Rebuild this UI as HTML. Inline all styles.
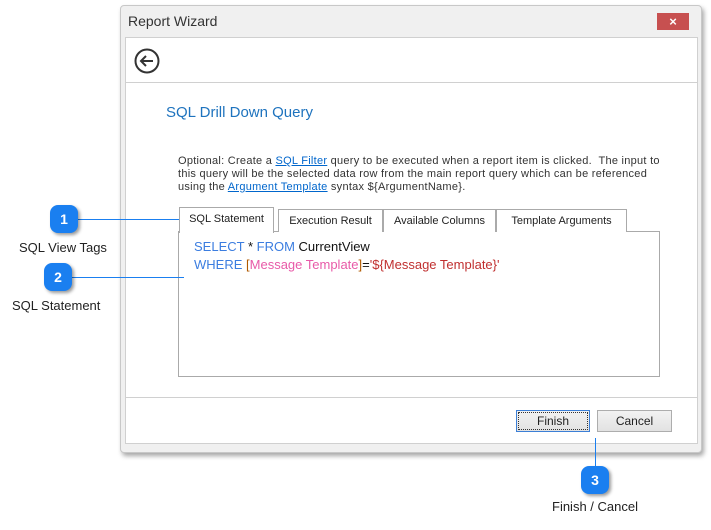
<!DOCTYPE html><html><head><style>
body{margin:0;width:711px;height:530px;background:#fff;position:relative;font-family:"Liberation Sans",sans-serif;overflow:hidden}
.a{position:absolute}
.win{left:120px;top:5px;width:580px;height:446px;background:#f0f0f0;border:1px solid #c8c8c8;border-radius:4px;box-shadow:2px 3px 5px rgba(0,0,0,.35)}
.in{left:125px;top:37px;width:571px;height:405px;background:#fff;border:1px solid #d0d0d0}
.tab{top:209px;height:22px;border:1px solid #aaa;border-bottom:none;background:#fff;font-size:11px;text-align:center;line-height:22px;color:#222}
.badge{width:28px;height:28px;border-radius:8px;background:#1a7ff0;color:#fff;font-weight:bold;font-size:14px;text-align:center;line-height:28px;box-shadow:2px 2px 3px rgba(0,0,0,.4)}
.lbl{font-size:13px;color:#222}
.btn{top:410px;height:20px;border:1px solid #adadad;background:linear-gradient(#f2f2f2,#e2e2e2);font-size:12px;text-align:center;line-height:20px;color:#222}
a{color:#0066cc}
</style></head><body>
<div class="a win"></div>
<div class="a" style="left:128px;top:13px;font-size:14px;color:#333">Report Wizard</div>
<div class="a" style="left:657px;top:13px;width:32px;height:17px;background:#c75050;color:#fff;text-align:center;font-size:13px;line-height:17px;font-weight:bold">×</div>
<div class="a in"></div>
<div class="a" style="left:126px;top:82px;width:571px;border-top:1px solid #d0d0d0"></div>
<svg class="a" style="left:133px;top:47px" width="28" height="28"><circle cx="14" cy="14" r="11.5" fill="none" stroke="#333" stroke-width="2"/><path d="M20 14H8M13 9l-5 5 5 5" fill="none" stroke="#333" stroke-width="2"/></svg>
<div class="a" style="left:166px;top:104px;font-size:15px;color:#1e73be">SQL Drill Down Query</div>
<div class="a" style="left:178px;top:155px;width:486px;font-size:11px;line-height:13px;letter-spacing:0.27px;color:#333">Optional: Create a <a href="#">SQL Filter</a> query to be executed when a report item is clicked.&nbsp; The input to this query will be the selected data row from the main report query which can be referenced using the <a href="#">Argument Template</a> syntax ${ArgumentName}.</div>
<div class="a" style="left:178px;top:231px;width:480px;height:144px;border:1px solid #aaa;background:#fff"></div>
<div class="a tab" style="left:179px;width:93px;top:207px;height:25px">SQL Statement</div>
<div class="a tab" style="left:278px;width:103px">Execution Result</div>
<div class="a tab" style="left:383px;width:111px">Available Columns</div>
<div class="a tab" style="left:496px;width:129px">Template Arguments</div>
<div class="a" style="left:194px;top:238px;font-size:13px;line-height:18px;color:#111"><span style="color:#3b7de0">SELECT</span> * <span style="color:#3b7de0">FROM</span> CurrentView<br><span style="color:#3b7de0">WHERE</span> <span style="color:#b05a00">[</span><span style="color:#e85aa8">Message Template</span><span style="color:#b05a00">]</span>=<span style="color:#c03030">'${Message Template}'</span></div>
<div class="a" style="left:126px;top:397px;width:571px;border-top:1px solid #d0d0d0"></div>
<div class="a btn" style="left:516px;width:72px;border-color:#3c7fd6;outline:1px dotted #333;outline-offset:-3px">Finish</div>
<div class="a btn" style="left:597px;width:73px">Cancel</div>
<div class="a" style="left:78px;top:219px;width:101px;border-top:1px solid #1a7ff0"></div>
<div class="a" style="left:72px;top:277px;width:112px;border-top:1px solid #1a7ff0"></div>
<div class="a" style="left:595px;top:438px;height:30px;border-left:1px solid #1a7ff0"></div>
<div class="a badge" style="left:50px;top:205px">1</div>
<div class="a lbl" style="left:19px;top:240px">SQL View Tags</div>
<div class="a badge" style="left:44px;top:263px">2</div>
<div class="a lbl" style="left:12px;top:298px">SQL Statement</div>
<div class="a badge" style="left:581px;top:466px">3</div>
<div class="a lbl" style="left:552px;top:499px">Finish / Cancel</div>
</body></html>
